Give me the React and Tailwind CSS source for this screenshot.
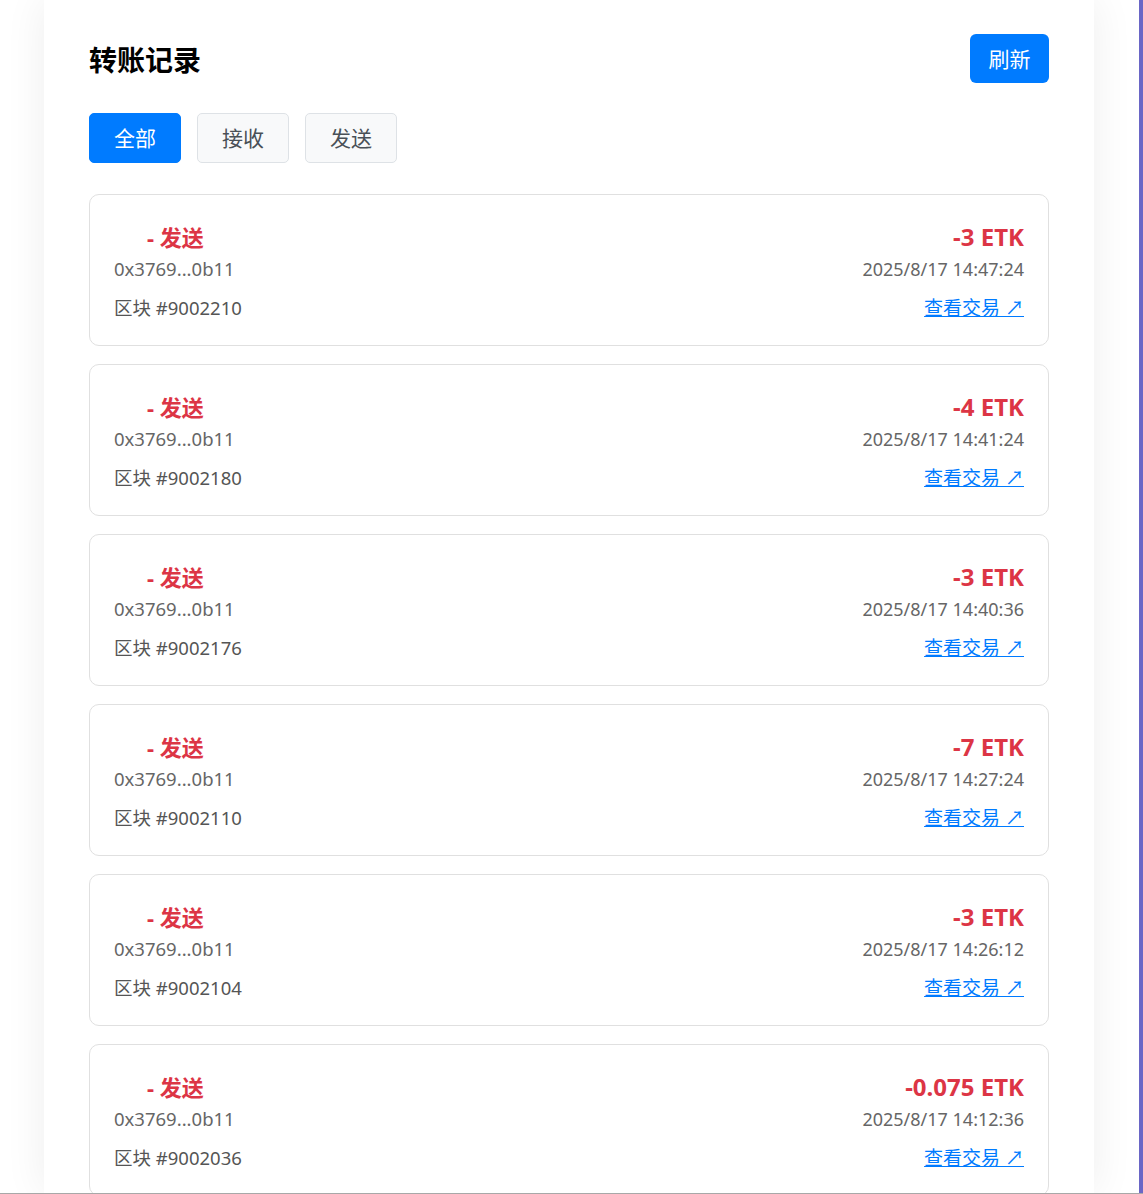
const records = [
  { amount: "-3", time: "2025/8/17 14:47:24", block: "9002210" },
  { amount: "-4", time: "2025/8/17 14:41:24", block: "9002180" },
  { amount: "-3", time: "2025/8/17 14:40:36", block: "9002176" },
  { amount: "-7", time: "2025/8/17 14:27:24", block: "9002110" },
  { amount: "-3", time: "2025/8/17 14:26:12", block: "9002104" },
  { amount: "-0.075", time: "2025/8/17 14:12:36", block: "9002036" },
];

const font = { fontFamily: '"Noto Sans", "Noto Sans CJK SC", sans-serif' };

export default function App() {
  return (
    <div style={font} className="h-[1194px] w-full flex flex-col overflow-hidden bg-white">
      <div className="flex flex-1 min-h-0">
        <div className="flex-1 min-w-0 bg-white">
          <div className="ml-[44px] w-[1050px] h-full bg-white px-[45px] pt-[34px] shadow-[0_0_40px_rgba(0,0,0,0.07)]">
            {/* Header */}
            <div className="flex justify-between items-center h-[49px]">
              <h2 className="text-[28px] font-bold text-black leading-none mt-[2px]">转账记录</h2>
              <button className="w-[79px] h-[49px] pt-[2px] rounded-[6px] bg-[#007bff] text-white text-[21px]">刷新</button>
            </div>

            {/* Tabs */}
            <div className="flex gap-[16px] mt-[30px]">
              <button className="h-[50px] px-[24px] pt-[2px] rounded-[5px] bg-[#007bff] border border-[#007bff] text-white text-[21px]">全部</button>
              <button className="h-[50px] px-[24px] pt-[2px] rounded-[5px] bg-[#f8f9fa] border border-[#dee2e6] text-[#495057] text-[21px]">接收</button>
              <button className="h-[50px] px-[24px] pt-[2px] rounded-[5px] bg-[#f8f9fa] border border-[#dee2e6] text-[#495057] text-[21px]">发送</button>
            </div>

            {/* List */}
            <div className="flex flex-col gap-[18px] mt-[31px]">
              {records.map((r, i) => (
                <div key={i} className="flex justify-between border border-[#e0e0e0] rounded-[10px] px-[24px] py-[25px] shrink-0">
                  <div className="flex flex-col">
                    <div className="h-[34px] leading-[34px] text-[22px] font-bold text-[#dc3545]">
                      <span className="inline-block w-[33px]"></span>- 发送
                    </div>
                    <div className="h-[30px] leading-[30px] text-[18.5px] text-[#666]">0x3769...0b11</div>
                    <div className="mt-[12px] h-[24px] leading-[24px] text-[18.5px] text-[#555]">区块 #{r.block}</div>
                  </div>
                  <div className="flex flex-col items-end">
                    <div className="h-[34px] leading-[34px] text-[24px] font-bold text-[#dc3545]">{r.amount} ETK</div>
                    <div className="h-[30px] leading-[30px] text-[18px] text-[#666]">{r.time}</div>
                    <a href="#" className="mt-[12px] h-[24px] leading-[24px] text-[19px] text-[#007bff] underline">查看交易 ↗</a>
                  </div>
                </div>
              ))}
            </div>
          </div>
        </div>
        <div className="w-[4px] bg-[#6a66c6]"></div>
      </div>
      <div className="h-[1px] bg-[#a8a8a8]"></div>
    </div>
  );
}
